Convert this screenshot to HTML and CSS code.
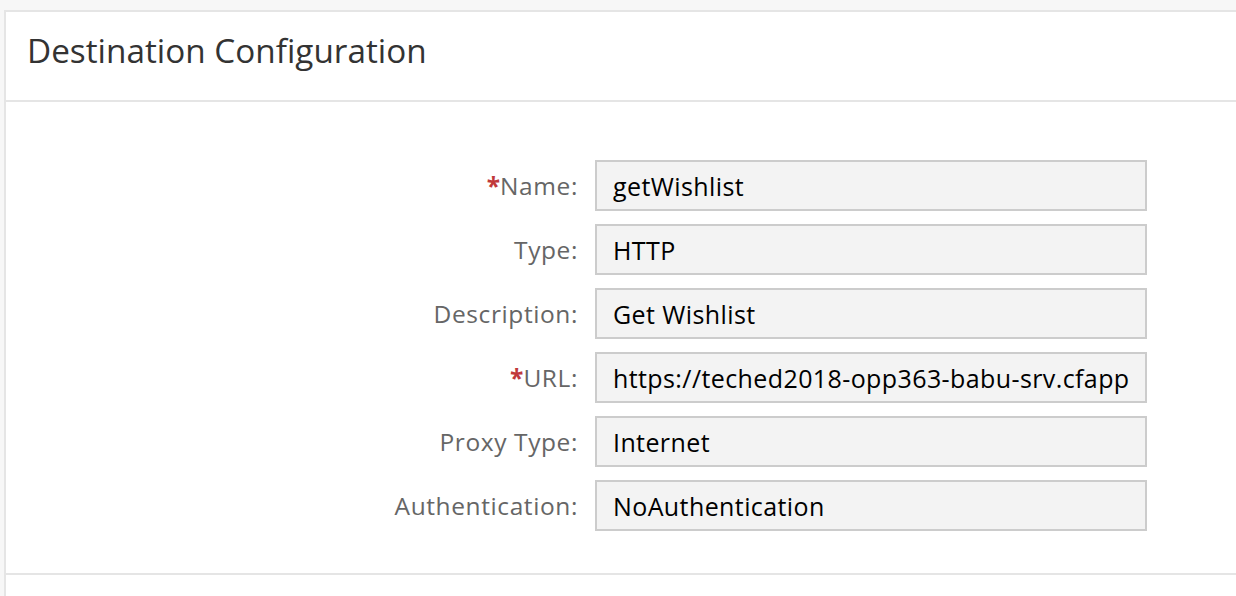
FILE: index.html
```html
<!DOCTYPE html>
<html>
<head>
<meta charset="utf-8">
<link rel="stylesheet" href="styles.css">
</head>
<body>
<div class="panel">
  <div class="panel-header">
    <h1 class="title">Destination Configuration</h1>
  </div>
  <div class="panel-body">
    <div class="form">
      <div class="row">
        <label class="label"><span class="req">*</span>Name:</label>
        <div class="field"><span class="value">getWishlist</span></div>
      </div>
      <div class="row">
        <label class="label">Type:</label>
        <div class="field"><span class="value">HTTP</span></div>
      </div>
      <div class="row">
        <label class="label">Description:</label>
        <div class="field"><span class="value">Get Wishlist</span></div>
      </div>
      <div class="row">
        <label class="label"><span class="req">*</span>URL:</label>
        <div class="field"><span class="value">https://teched2018-opp363-babu-srv.cfapps.eu10.hana.ondemand.com</span></div>
      </div>
      <div class="row">
        <label class="label">Proxy Type:</label>
        <div class="field"><span class="value">Internet</span></div>
      </div>
      <div class="row">
        <label class="label">Authentication:</label>
        <div class="field"><span class="value">NoAuthentication</span></div>
      </div>
    </div>
  </div>
  <div class="panel-footer"></div>
</div>
</body>
</html>
```

FILE: styles.css
```css
html, body {
  margin: 0;
  padding: 0;
  background: #f7f7f7;
  font-family: "Open Sans", "Noto Sans", "Liberation Sans", sans-serif;
}

.panel {
  margin: 10px 0 0 4px;
  width: 1260px;
  background: #fff;
  border-top: 2px solid #e5e5e5;
  border-left: 2px solid #e5e5e5;
}

.panel-header {
  height: 90px;
  box-sizing: border-box;
  padding: 15px 0 0 21px;
  border-bottom: 2px solid #e5e5e5;
}

.title {
  margin: 0;
  font-size: 33.3px;
  line-height: 46px;
  font-weight: 400;
  color: #333;
}

.panel-body {
  padding: 58px 0 42px 0;
}

.form {
  display: flex;
  flex-direction: column;
  gap: 13px;
}

.row {
  display: flex;
  align-items: center;
}

.label {
  width: 589px;
  text-align: right;
  font-size: 24.5px;
  letter-spacing: 0.6px;
  color: #666;
  padding-right: 17px;
  box-sizing: border-box;
}

.req {
  color: #c0393b;
  font-weight: 700;
  letter-spacing: 0;
}

.field {
  width: 552px;
  height: 51px;
  box-sizing: border-box;
  border: 2px solid #cccccc;
  background: #f3f3f3;
  display: flex;
  align-items: center;
  padding: 0 16px;
}

.value {
  flex: 1;
  min-width: 0;
  overflow: hidden;
  font-size: 25px;
  letter-spacing: 0.4px;
  color: #000;
  white-space: nowrap;
}

.panel-footer {
  border-top: 2px solid #e5e5e5;
  height: 30px;
}
```
